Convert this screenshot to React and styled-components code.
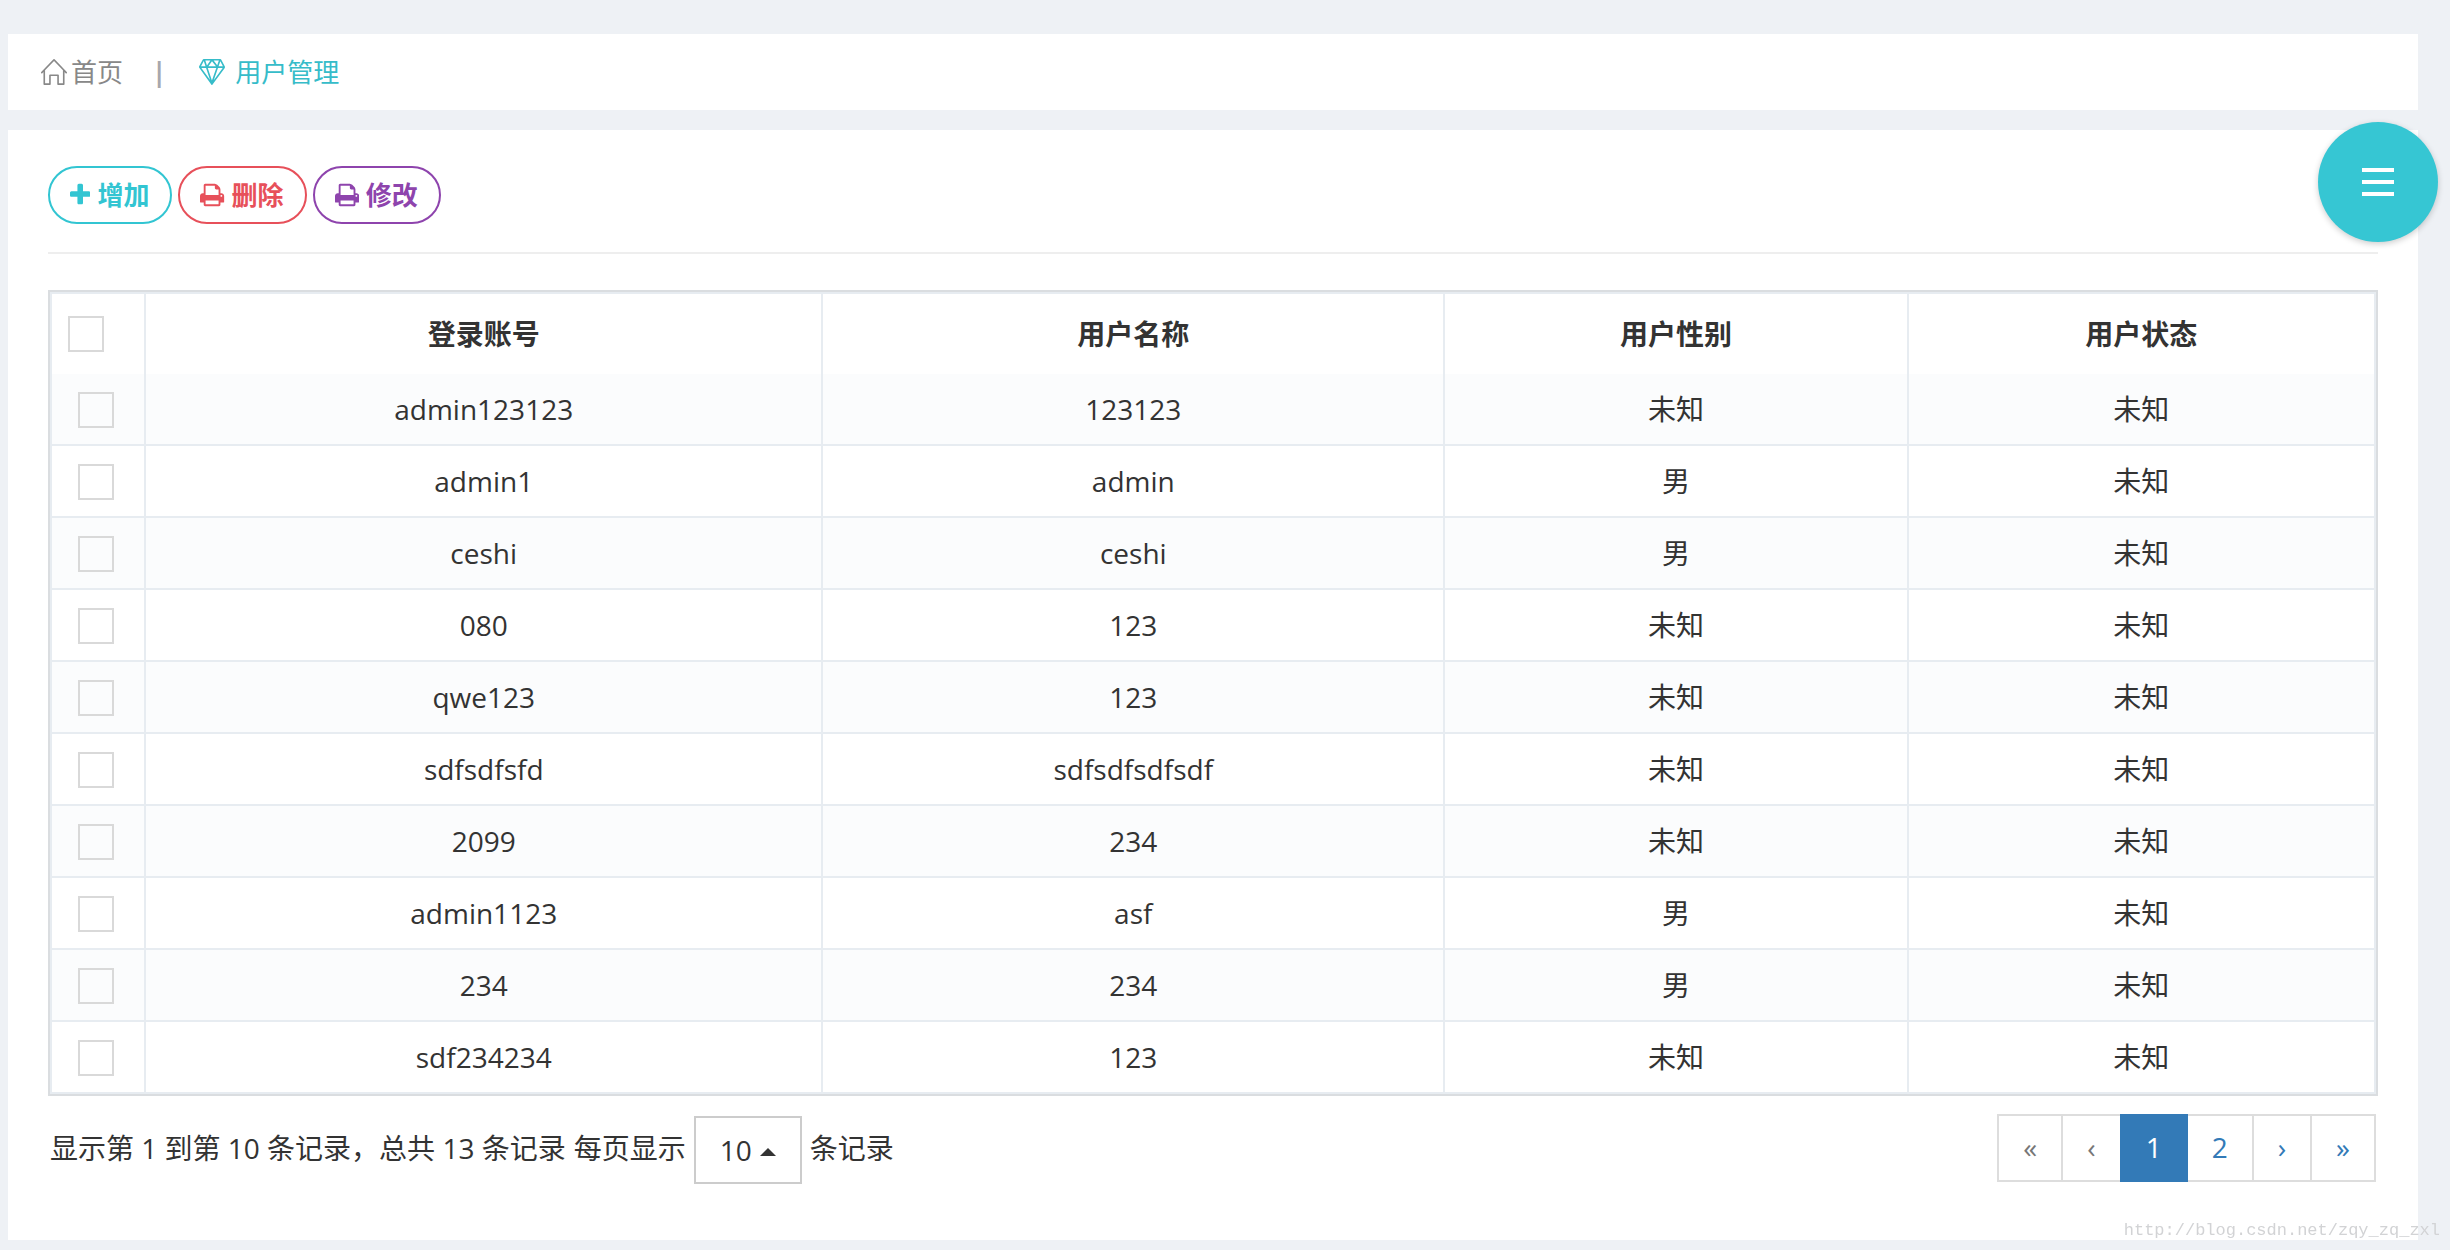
import { useState } from "react";
import styled, { createGlobalStyle } from "styled-components";
import { SlDiamond, SlHome } from "react-icons/sl";

const GlobalStyle = createGlobalStyle`
  * {
    box-sizing: border-box;
  }
  body {
    margin: 0;
    background-color: #eef1f5;
    color: #333;
    font-family: "Open Sans", "Noto Sans CJK SC", sans-serif;
    font-size: 28px;
    line-height: 40px;
  }
  button, input, select {
    font: inherit;
    color: inherit;
  }
`;

const Page = styled.div`
  display: flex;
  flex-direction: column;
  gap: 20px;
  min-height: 100vh;
  padding: 34px 32px 10px 8px;
`;

const Breadcrumb = styled.nav`
  display: flex;
  align-items: center;
  gap: 29px;
  height: 76px;
  padding: 0 33px;
  background-color: white;
  font-size: 26px;
`;

const Crumb = styled.a`
  display: flex;
  align-items: center;
  gap: ${({ $active }) => ($active ? "10px" : "4px")};
  color: ${({ $active }) => ($active ? "#36bcc9" : "#888")};
  text-decoration: none;
`;

const Separator = styled.span`
  padding-right: 4px;
  color: #a7a7ad;
  font-weight: 700;
`;

const Card = styled.main`
  flex: 1;
  padding: 36px 40px 56px;
  background-color: white;
`;

const Toolbar = styled.div`
  display: flex;
  gap: 6px;
  padding-bottom: 28px;
  margin-bottom: 36px;
  border-bottom: 2px solid #eee;
`;

const ActionButton = styled.button`
  display: flex;
  align-items: center;
  gap: 7px;
  height: 58px;
  padding: 0 21px 0 20px;
  border: 2px solid ${({ $color }) => $color};
  border-radius: 29px;
  background-color: white;
  color: ${({ $color }) => $color};
  font-size: 26px;
  font-weight: 700;
  cursor: pointer;
`;

const Glyph = styled.svg`
  display: block;
  height: 26px;
  fill: currentColor;
`;

const TableFrame = styled.div`
  border: 2px solid #dadde0;
`;

const Table = styled.table`
  width: 100%;
  table-layout: fixed;
  border-collapse: separate;
  border-spacing: 0;
  border: solid #e7ecf1;
  border-width: 2px 0 0 2px;
`;

const Column = styled.col`
  width: ${({ $width }) => $width};
`;

const HeadCell = styled.th`
  height: 80px;
  padding: 0 16px;
  border-right: 2px solid #e7ecf1;
  font-weight: 700;
  text-align: ${({ $align }) => $align || "center"};
`;

const Row = styled.tr`
  background-color: ${({ $striped }) => ($striped ? "#fbfcfd" : "white")};
`;

const Cell = styled.td`
  height: 72px;
  padding: 0 16px;
  border: solid #e7ecf1;
  border-width: 0 2px 2px 0;
  text-align: center;
`;

const Checkbox = styled.input.attrs({ type: "checkbox" })`
  appearance: none;
  display: block;
  width: 36px;
  height: 36px;
  margin: ${({ $head }) => ($head ? "0" : "2px auto 0 10px")};
  border: 2px solid #d9d9d9;
  background-color: transparent;
  &:checked {
    background-color: #32c5d2;
  }
`;

const TableFooter = styled.div`
  display: flex;
  justify-content: space-between;
  align-items: flex-start;
  padding: 18px 2px 0;
`;

const Summary = styled.label`
  display: flex;
  align-items: flex-start;
  gap: 8px;
  padding-top: 2px;
  line-height: 64px;
`;

const SelectBox = styled.span`
  position: relative;
`;

const PageSize = styled.select`
  appearance: none;
  display: block;
  width: 108px;
  height: 68px;
  padding: 0 24px;
  border: 2px solid #ccc;
  border-radius: 0;
  background-color: white;
`;

const Caret = styled.svg`
  position: absolute;
  top: 32px;
  right: 26px;
  width: 16px;
  height: 8px;
  fill: #333;
  pointer-events: none;
`;

const Pagination = styled.nav`
  display: flex;
`;

const PageLink = styled.a`
  height: 68px;
  padding: 11px 24px;
  border: 2px solid ${({ $active }) => ($active ? "#337ab7" : "#ddd")};
  background-color: ${({ $active }) => ($active ? "#337ab7" : "white")};
  color: ${({ $active, $disabled }) =>
    $active ? "white" : $disabled ? "#777" : "#337ab7"};
  text-decoration: none;
  z-index: ${({ $active }) => ($active ? 1 : 0)};
  & + & {
    margin-left: -2px;
  }
`;

const MenuButton = styled.button`
  position: fixed;
  top: 122px;
  right: 12px;
  z-index: 2;
  display: flex;
  flex-direction: column;
  align-items: center;
  justify-content: center;
  gap: 8px;
  width: 120px;
  height: 120px;
  border: 0;
  border-radius: 50%;
  background-color: #36c6d3;
  box-shadow: 0 2px 6px rgba(0, 0, 0, 0.2);
  cursor: pointer;
`;

const MenuBar = styled.span`
  width: 32px;
  height: 4px;
  background-color: white;
`;

const Watermark = styled.div`
  position: fixed;
  right: 10px;
  bottom: 7px;
  color: #d2d3d5;
  font-family: "Liberation Mono", monospace;
  font-size: 17px;
  line-height: 24px;
`;

const PlusIcon = () => (
  <Glyph viewBox="0 -1536 1408 1792" aria-hidden="true">
    <path
      transform="scale(1 -1)"
      d="M1408 800v-192q0 -40 -28 -68t-68 -28h-416v-416q0 -40 -28 -68t-68 -28h-192q-40 0 -68 28t-28 68v416h-416q-40 0 -68 28t-28 68v192q0 40 28 68t68 28h416v416q0 40 28 68t68 28h192q40 0 68 -28t28 -68v-416h416q40 0 68 -28t28 -68z"
    />
  </Glyph>
);

const PrintIcon = () => (
  <Glyph viewBox="0 -1536 1664 1792" aria-hidden="true">
    <path
      transform="scale(1 -1)"
      d="M384 0h896v256h-896v-256zM384 640h896v384h-160q-40 0 -68 28t-28 68v160h-640v-640zM1536 576q0 26 -19 45t-45 19t-45 -19t-19 -45t19 -45t45 -19t45 19t19 45zM1664 576v-416q0 -13 -9.5 -22.5t-22.5 -9.5h-224v-160q0 -40 -28 -68t-68 -28h-960q-40 0 -68 28t-28 68v160h-224q-13 0 -22.5 9.5t-9.5 22.5v416q0 79 56.5 135.5t135.5 56.5h64v544q0 40 28 68t68 28h672q40 0 88 -20t76 -48l152 -152q28 -28 48 -76t20 -88v-256h64q79 0 135.5 -56.5t56.5 -135.5z"
    />
  </Glyph>
);

const actions = [
  { label: "增加", color: "#32c5d2", Icon: PlusIcon },
  { label: "删除", color: "#e7505a", Icon: PrintIcon },
  { label: "修改", color: "#8e44ad", Icon: PrintIcon },
];

const columns = [
  { title: "登录账号", width: "29.15%" },
  { title: "用户名称", width: "26.75%" },
  { title: "用户性别", width: "19.95%" },
  { title: "用户状态", width: "auto" },
];

const users = [
  { account: "admin123123", name: "123123", sex: "未知", status: "未知" },
  { account: "admin1", name: "admin", sex: "男", status: "未知" },
  { account: "ceshi", name: "ceshi", sex: "男", status: "未知" },
  { account: "080", name: "123", sex: "未知", status: "未知" },
  { account: "qwe123", name: "123", sex: "未知", status: "未知" },
  { account: "sdfsdfsfd", name: "sdfsdfsdfsdf", sex: "未知", status: "未知" },
  { account: "2099", name: "234", sex: "未知", status: "未知" },
  { account: "admin1123", name: "asf", sex: "男", status: "未知" },
  { account: "234", name: "234", sex: "男", status: "未知" },
  { account: "sdf234234", name: "123", sex: "未知", status: "未知" },
];

const pages = [
  { text: "«", disabled: true },
  { text: "‹", disabled: true },
  { text: "1", active: true },
  { text: "2" },
  { text: "›" },
  { text: "»" },
];

export default function App() {
  const [selected, setSelected] = useState([]);

  const toggle = (account) =>
    setSelected(
      selected.includes(account)
        ? selected.filter((item) => item !== account)
        : [...selected, account]
    );

  const toggleAll = () =>
    setSelected(
      selected.length === users.length ? [] : users.map((u) => u.account)
    );

  return (
    <>
      <GlobalStyle />
      <Page>
        <Breadcrumb>
          <Crumb href="#home">
            <SlHome />
            首页
          </Crumb>
          <Separator>|</Separator>
          <Crumb href="#users" $active>
            <SlDiamond />
            用户管理
          </Crumb>
        </Breadcrumb>
        <Card>
          <Toolbar>
            {actions.map(({ label, color, Icon }) => (
              <ActionButton key={label} type="button" $color={color}>
                <Icon />
                {label}
              </ActionButton>
            ))}
          </Toolbar>
          <TableFrame>
            <Table>
              <colgroup>
                <Column $width="94px" />
                {columns.map((column) => (
                  <Column key={column.title} $width={column.width} />
                ))}
              </colgroup>
              <thead>
                <tr>
                  <HeadCell $align="left">
                    <Checkbox
                      $head
                      aria-label="全选"
                      checked={selected.length === users.length}
                      onChange={toggleAll}
                    />
                  </HeadCell>
                  {columns.map((column) => (
                    <HeadCell key={column.title}>{column.title}</HeadCell>
                  ))}
                </tr>
              </thead>
              <tbody>
                {users.map((user, index) => (
                  <Row key={user.account} $striped={index % 2 === 0}>
                    <Cell>
                      <Checkbox
                        aria-label={user.account}
                        checked={selected.includes(user.account)}
                        onChange={() => toggle(user.account)}
                      />
                    </Cell>
                    <Cell>{user.account}</Cell>
                    <Cell>{user.name}</Cell>
                    <Cell>{user.sex}</Cell>
                    <Cell>{user.status}</Cell>
                  </Row>
                ))}
              </tbody>
            </Table>
          </TableFrame>
          <TableFooter>
            <Summary>
              <span>显示第 1 到第 10 条记录，总共 13 条记录</span>
              <span>每页显示</span>
              <SelectBox>
                <PageSize defaultValue="10">
                  <option>10</option>
                  <option>25</option>
                  <option>50</option>
                </PageSize>
                <Caret viewBox="0 0 16 8" aria-hidden="true">
                  <path d="M0 8L8 0L16 8Z" />
                </Caret>
              </SelectBox>
              <span>条记录</span>
            </Summary>
            <Pagination>
              {pages.map(({ text, active, disabled }) => (
                <PageLink
                  key={text}
                  href="#page"
                  $active={active}
                  $disabled={disabled}
                >
                  {text}
                </PageLink>
              ))}
            </Pagination>
          </TableFooter>
        </Card>
      </Page>
      <MenuButton type="button" aria-label="菜单">
        <MenuBar />
        <MenuBar />
        <MenuBar />
      </MenuButton>
      <Watermark>http://blog.csdn.net/zqy_zq_zxl</Watermark>
    </>
  );
}
